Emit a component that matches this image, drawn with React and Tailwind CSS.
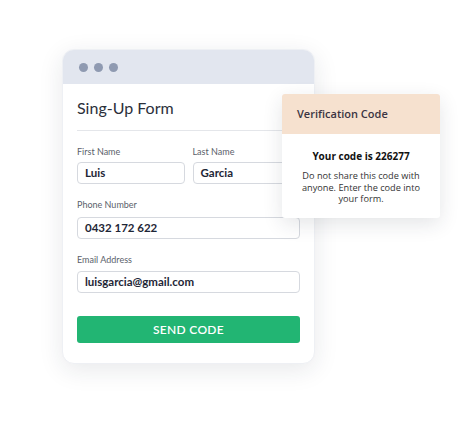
import React from 'react';

const Field = ({ label, value, className = '', labelMt = 'mt-[14px]', inputMt = 'mt-[3px]' }) => (
  <div className={className}>
    <div className={`${labelMt} h-[14px] leading-[14px] text-[9px] text-[#5b5f6b]`}>{label}</div>
    <div className={`${inputMt} h-[22px] rounded-[4px] border border-[#d6d9df] bg-white px-[7px] flex items-center text-[11.5px] font-bold text-[#1e2636]`}>
      {value}
    </div>
  </div>
);

const App = () => {
  return (
    <div
      className="relative w-[474px] h-[439px] bg-white overflow-hidden"
      style={{ fontFamily: 'Lato, "Liberation Sans", sans-serif' }}
    >
      <div className="pt-[49px] pl-[62px]">
        {/* Main form card */}
        <div className="w-[253px] rounded-[12px] bg-white shadow-[0_6px_24px_rgba(30,41,59,0.10)] border border-[#eef0f4] overflow-hidden">
          <div className="h-[34px] bg-[#e2e6ef] flex items-center gap-[6px] pl-[16px]">
            <span className="w-[9px] h-[9px] rounded-full bg-[#8f9ab1]" />
            <span className="w-[9px] h-[9px] rounded-full bg-[#8f9ab1]" />
            <span className="w-[9px] h-[9px] rounded-full bg-[#8f9ab1]" />
          </div>
          <div className="px-[14px] pb-[20px]">
            <div className="mt-[15px] h-[18px] leading-[18px] text-[16px] text-[#2b2f3a]">Sing-Up Form</div>
            <div className="mt-[13px] border-t border-[#e4e6ea]" />
            <div className="grid grid-cols-2 gap-x-[8px]">
              <Field label="First Name" value="Luis" />
              <Field label="Last Name" value="Garcia" />
            </div>
            <Field label="Phone Number" value="0432 172 622" labelMt="mt-[14px]" inputMt="mt-[5px]" />
            <Field label="Email Address" value="luisgarcia@gmail.com" labelMt="mt-[14px]" inputMt="mt-[4px]" />
            <button className="mt-[23px] w-full h-[27px] rounded-[3px] bg-[#22b573] text-white text-[12px] font-semibold tracking-[0.3px] flex items-center justify-center">
              SEND CODE
            </button>
          </div>
        </div>
      </div>

      {/* Verification popup */}
      <div
        className="absolute left-[282px] top-[94px] w-[158px] bg-white rounded-[3px] shadow-[0_6px_20px_rgba(30,41,59,0.12)] overflow-hidden"
        style={{ fontFamily: '"Open Sans", Lato, "Liberation Sans", sans-serif' }}
      >
        <div className="h-[40px] bg-[#f6e1cf] flex items-center pl-[15px] text-[11px] font-semibold text-[#3b3442]">
          Verification Code
        </div>
        <div className="px-[18px] pt-[16px] pb-[13px] text-center">
          <div className="text-[10px] font-bold text-[#111] leading-[13px]">Your code is 226277</div>
          <div className="mt-[7px] text-[9.2px] leading-[11.5px] text-[#333]">
            Do not share this code with anyone. Enter the code into your form.
          </div>
        </div>
      </div>
    </div>
  );
};

export default App;
